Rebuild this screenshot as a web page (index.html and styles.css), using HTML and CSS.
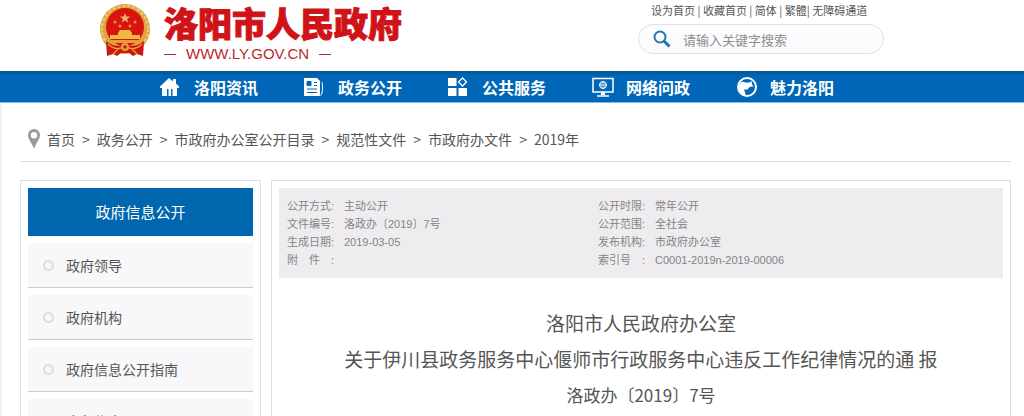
FILE: index.html
```html
<!DOCTYPE html>
<html lang="zh-CN">
<head>
    <meta charset="UTF-8">
    <meta name="viewport" content="width=device-width, initial-scale=1.0">
    <title>洛阳市人民政府</title>
    <link rel="stylesheet" href="styles.css">
</head>
<body>

<!-- Header -->
<header class="header">
    <div class="logo">
        <svg class="emblem" viewBox="0 0 52 54" aria-hidden="true">
            <circle cx="26" cy="25" r="25" fill="#dba544"/>
            <circle cx="26" cy="25" r="23" fill="none" stroke="#efcb68" stroke-width="2" stroke-dasharray="3 2"/>
            <circle cx="26" cy="23" r="19" fill="#d8140f"/>
            <path d="M26 9l1.300 3.600h3.800l-3 2.300 1.100 3.700-3.200-2.200-3.200 2.200 1.100-3.700-3-2.300h3.800z" fill="#f3b070"/>
            <g fill="#e98a4a">
                <circle cx="16" cy="18" r="1.500"/>
                <circle cx="21" cy="22" r="1.500"/>
                <circle cx="31" cy="22" r="1.500"/>
                <circle cx="36" cy="18" r="1.500"/>
            </g>
            <path d="M19 29l2-3h10l2 3v2h8v4H11v-4h8z" fill="#f0b840"/>
            <path d="M9 36h34v3H9z" fill="#e5a234"/>
            <path d="M7 37c6 5 12 6 19 3 7 3 13 2 19-3l-1 15-6-2-4 2-4-3h-8l-4 3-4-2-6 2z" fill="#cf1712"/>
            <path d="M9 40c5 5 11 6 17 2 6 4 12 3 17-2M14 50l6-6M38 50l-6-6" fill="none" stroke="#e9a23a" stroke-width="1.200"/>
            <circle cx="26" cy="43" r="4" fill="#e5a234"/>
            <circle cx="26" cy="43" r="1.800" fill="#cf1712"/>
        </svg>
        <div class="logo-text">
            <h1>洛阳市人民政府</h1>
            <p class="domain">WWW.LY.GOV.CN</p>
        </div>
    </div>
    <div class="tools">
        <div class="top-links">
            <a href="#">设为首页</a> | <a href="#">收藏首页</a> | <a href="#">简体</a> | <a href="#">繁體</a>| <a href="#">无障碍通道</a>
        </div>
        <form class="search">
            <button type="submit" aria-label="搜索">
                <svg viewBox="0 0 18 18" width="18" height="18" fill="none" stroke="#2475ab">
                    <circle cx="7" cy="7" r="5.500" stroke-width="2"/>
                    <path d="M11 11l5.500 5.500" stroke-width="3"/>
                </svg>
            </button>
            <input type="text" aria-label="关键字" placeholder="请输入关键字搜索">
        </form>
    </div>
</header>

<!-- Navigation -->
<nav class="nav">
    <ul>
        <li><a href="#">
            <svg viewBox="0 0 22 20"><path d="M9 1L0 9.500V11h2v8h15v-8h2V9.500l-3-3V2h-3v2.500z" fill="#fff"/><path d="M7 19v-7h1.500v7M11 19v-7h1.500v7" fill="#0067b8"/></svg>洛阳资讯</a></li>
        <li><a href="#">
            <svg viewBox="0 0 22 20"><path d="M0 1h13l3 3v15H0z" fill="#fff"/><path d="M17.500 5c1 1 1 2 1 5s0 7-2 8.500" fill="none" stroke="#fff"/><path d="M3 4.500h4v4H3zM10 5.500h3M10 8.500h3M3 12h10M3 15.500h10" fill="#0067b8" stroke="#0067b8"/></svg>政务公开</a></li>
        <li><a href="#">
            <svg viewBox="0 0 22 20" fill="#fff"><path d="M0 1h8.500v8H0zM0 11h8.500v8H0zM10.500 11H19v8h-8.500z"/><path d="M14.500 1l4 4-4 4-4-4z" fill="none" stroke="#fff" stroke-width="1.300"/></svg>公共服务</a></li>
        <li><a href="#">
            <svg viewBox="0 0 22 20" fill="none" stroke="#fff"><path d="M1 1.500h20v13.500H1z" stroke-width="1.500"/><circle cx="11" cy="8" r="3.500"/><path d="M7.500 8h7M11 4.500v7M11 4.500c-3 2-3 5 0 7M11 4.500c3 2 3 5 0 7" stroke-width=".7"/><path d="M11 15v3" stroke-width="4"/><path d="M5 19h12" stroke-width="1.500"/></svg>网络问政</a></li>
        <li><a href="#">
            <svg viewBox="0 0 22 20"><circle cx="11" cy="10" r="9" fill="none" stroke="#fff" stroke-width="2"/><path d="M3 8c1-3 3-4 5-3 3 1 5 1 8-1-1 2 1 5 2 6-3-1-5 0-6 2-1 1-3 1-4 0l2 7C4 18 2 13 3 8z" fill="#fff"/></svg>魅力洛阳</a></li>
    </ul>
</nav>

<main class="main">
    <!-- Breadcrumb -->
    <div class="breadcrumb">
        <svg viewBox="0 0 12 20" width="12" height="20" aria-hidden="true"><path d="M6 0a6 6 0 0 0-6 6c0 4 4 8 6 14 2-6 6-10 6-14a6 6 0 0 0-6-6zm0 3a3.200 3.200 0 1 1 0 6.400A3.200 3.200 0 0 1 6 3z" fill="#999"/></svg>
        <a href="#">首页</a><span>&gt;</span>
        <a href="#">政务公开</a><span>&gt;</span>
        <a href="#">市政府办公室公开目录</a><span>&gt;</span>
        <a href="#">规范性文件</a><span>&gt;</span>
        <a href="#">市政府办文件</a><span>&gt;</span>
        <a href="#">2019年</a>
    </div>

    <div class="columns">
        <!-- Sidebar -->
        <aside class="sidebar">
            <h2>政府信息公开</h2>
            <ul>
                <li><a href="#">政府领导</a></li>
                <li><a href="#">政府机构</a></li>
                <li><a href="#">政府信息公开指南</a></li>
                <li><a href="#">应急信息</a></li>
            </ul>
        </aside>

        <!-- Article -->
        <article class="article">
            <div class="info">
                <dl>
                    <dt>公开方式:</dt><dd>主动公开</dd>
                    <dt>文件编号:</dt><dd>洛政办〔2019〕7号</dd>
                    <dt>生成日期:</dt><dd>2019-03-05</dd>
                    <dt>附　件　:</dt><dd></dd>
                </dl>
                <dl>
                    <dt>公开时限:</dt><dd>常年公开</dd>
                    <dt>公开范围:</dt><dd>全社会</dd>
                    <dt>发布机构:</dt><dd>市政府办公室</dd>
                    <dt>索引号　:</dt><dd>C0001-2019n-2019-00006</dd>
                </dl>
            </div>
            <div class="title">
                <p>洛阳市人民政府办公室</p>
                <p>关于伊川县政务服务中心偃师市行政服务中心违反工作纪律情况的通 报</p>
                <p class="number">洛政办〔2019〕7号</p>
            </div>
        </article>
    </div>
</main>

</body>
</html>
```
FILE: styles.css
```css
*, *::before, *::after {
    box-sizing: border-box;
}
html {
    overflow: hidden;
}
body {
    margin: 0;
    font-family: "Noto Sans CJK SC", sans-serif;
    font-size: 14px;
    color: #555;
    background-color: #fff;
}
h1, h2, p, ul, dl, dd {
    margin: 0;
    padding: 0;
}
ul {
    list-style: none;
}
a {
    color: inherit;
    text-decoration: none;
}

/* Header */
.header {
    display: flex;
    justify-content: space-between;
    height: 71px;
    padding: 0 140px 0 99px;
}
.logo {
    display: flex;
    gap: 13px;
}
.emblem {
    width: 52px;
    height: 54px;
    margin-top: 4px;
}
.logo-text h1 {
    margin-top: 3px;
    font-size: 34px;
    font-weight: 900;
    line-height: 40px;
    color: #cf1318;
    -webkit-text-stroke: 1px #cf1318;
}
.domain {
    display: flex;
    align-items: center;
    gap: 10px;
    font-family: "Liberation Sans", sans-serif;
    font-size: 15px;
    line-height: 22px;
    color: #b8292c;
}
.domain::before,
.domain::after {
    content: "";
    width: 12px;
    height: 1px;
    background-color: #b8292c;
}
.tools {
    width: 246px;
}
.top-links {
    padding: 2px 0 0 13px;
    font-size: 11px;
    line-height: 16px;
    white-space: nowrap;
}
.search {
    display: flex;
    align-items: center;
    height: 30px;
    margin-top: 6px;
    padding-left: 14px;
    border: 1px solid #e2e0e6;
    border-radius: 15px;
    background-color: #fcfbfd;
}
.search button {
    display: flex;
    padding: 0;
    border: 0;
    background: none;
}
.search input {
    flex: 1;
    min-width: 0;
    padding: 0 12px;
    border: 0;
    outline: none;
    background: none;
    font-family: inherit;
    font-size: 13px;
}
.search input::placeholder {
    color: #8d8d8d;
}

/* Navigation */
.nav {
    height: 32px;
    background: linear-gradient(#085591, #0067b8 6px);
    border-bottom: 1px solid #7fbfe6;
}
.nav ul {
    display: flex;
    max-width: 736px;
    margin: 0 auto;
    padding-left: 16px;
}
.nav li {
    flex: 1;
}
.nav a {
    display: flex;
    align-items: center;
    gap: 12px;
    height: 32px;
    font-size: 16px;
    font-weight: bold;
    color: #fff;
    white-space: nowrap;
}
.nav svg {
    width: 22px;
    height: 20px;
}

/* Breadcrumb */
.main {
    padding: 0 13px 0 18px;
    border-left: 2px solid #f3f1f6;
}
.breadcrumb {
    display: flex;
    align-items: center;
    gap: 7px;
    height: 59px;
    padding: 13px 0 0 8px;
    border-bottom: 1px solid #dddae2;
    white-space: nowrap;
}

/* Columns */
.columns {
    display: flex;
    gap: 10px;
    padding-top: 18px;
}
.sidebar {
    width: 241px;
    padding: 7px;
    border: 1px solid #dedce6;
}
.sidebar h2 {
    background-color: #0066ad;
    font-size: 15px;
    font-weight: normal;
    line-height: 48px;
    text-align: center;
    color: #fff;
}
.sidebar li {
    margin-top: 7px;
    border-bottom: 1px solid #ccc9cf;
    background-color: #f8f7f9;
}
.sidebar li a {
    display: flex;
    align-items: center;
    gap: 12px;
    height: 44px;
    padding-left: 15px;
}
.sidebar li a::before {
    content: "";
    width: 11px;
    height: 11px;
    border: 2px solid #dcdbde;
    border-radius: 50%;
}

/* Article */
.article {
    flex: 1;
    min-width: 0;
    padding: 7px;
    border: 1px solid #dedce6;
}
.info {
    display: grid;
    grid-template-columns: 311px 1fr;
    padding: 9px 8px;
    background-color: #eeecef;
    font-family: "Liberation Sans", "Noto Sans CJK SC", sans-serif;
    font-size: 11px;
    line-height: 18px;
    color: #858386;
}
.info dl {
    display: grid;
    grid-template-columns: 57px 1fr;
    grid-auto-rows: 18px;
}
.title {
    padding-top: 27px;
    font-size: 19px;
    line-height: 36px;
    text-align: center;
}
.title .number {
    font-size: 17px;
}
```
